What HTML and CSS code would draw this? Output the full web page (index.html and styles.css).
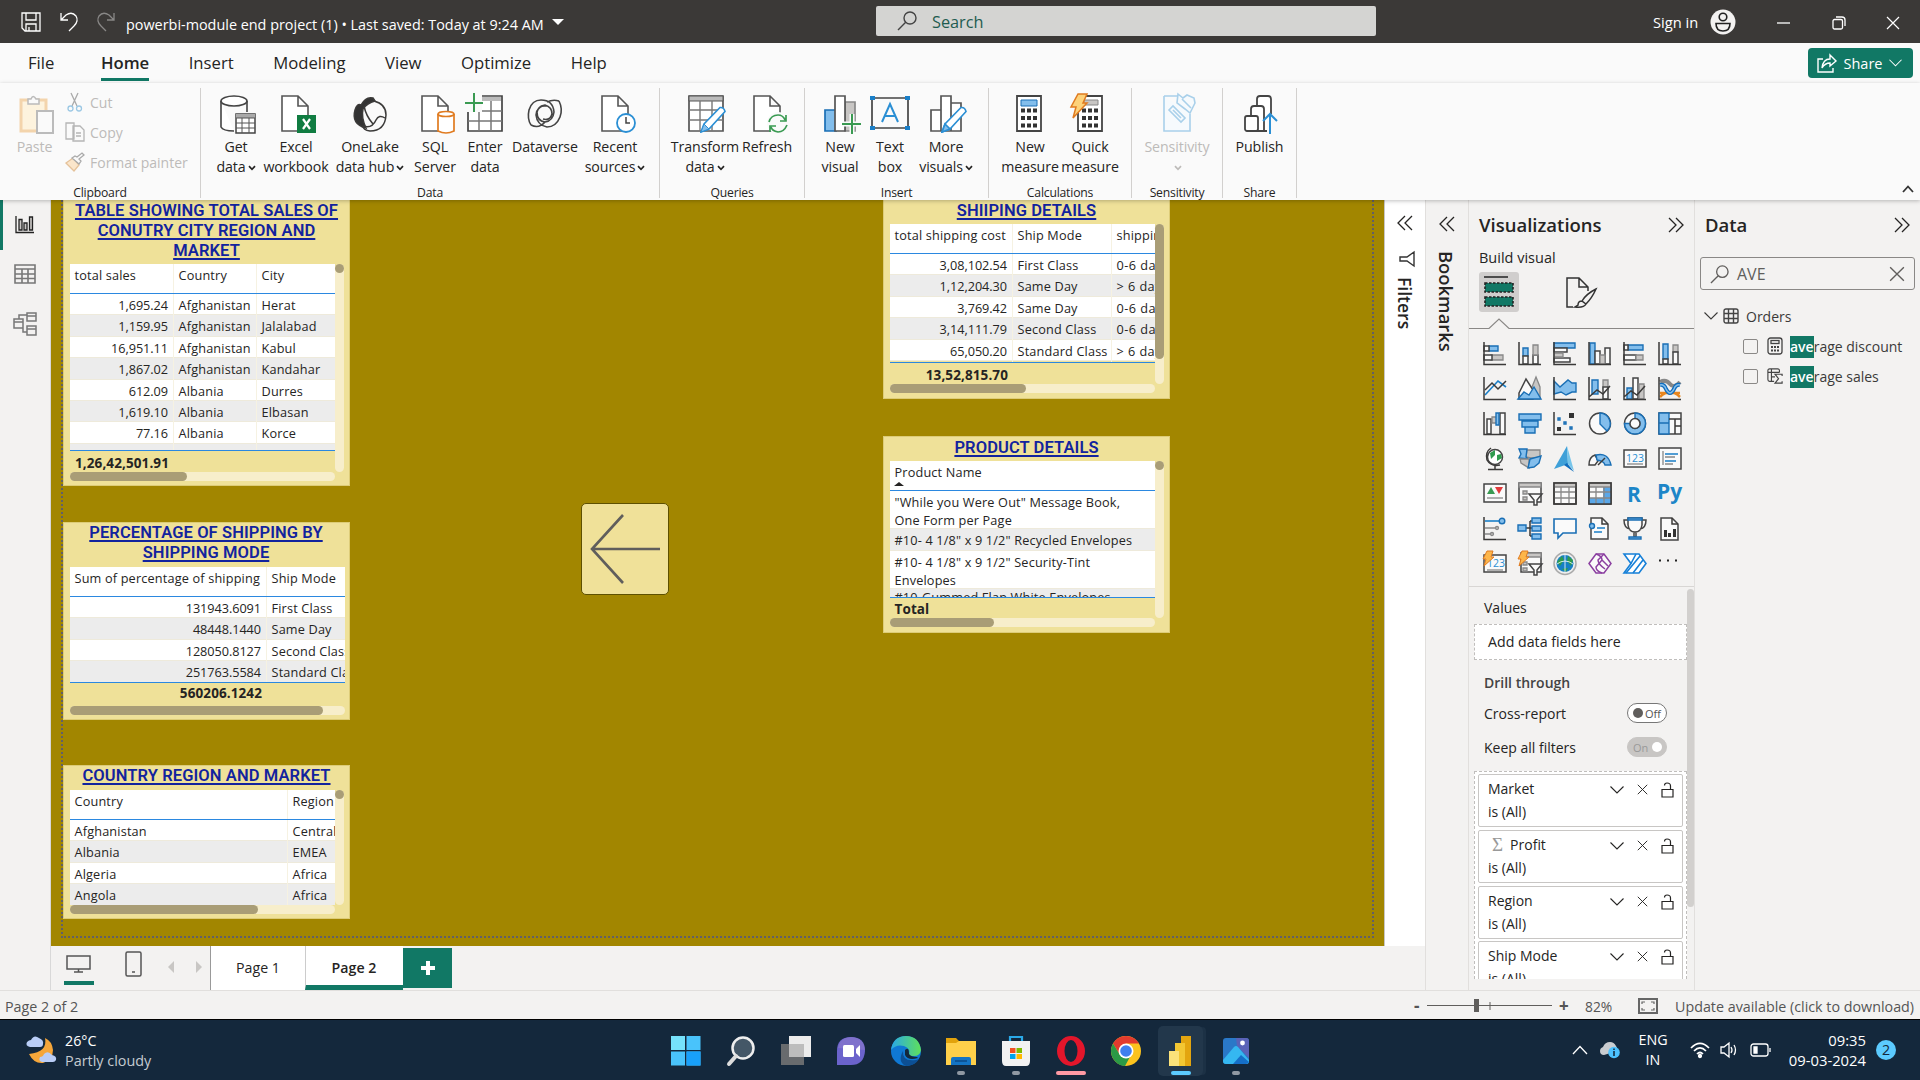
FILE: index.html
```html
<!DOCTYPE html>
<html lang="en">
<head>
<meta charset="utf-8">
<title>powerbi-module end project (1)</title>
<link rel="stylesheet" href="styles.css">
</head>
<body>
<svg class="defs" width="0" height="0">
  <symbol id="chev" viewBox="0 0 14 8"><path d="M.5 .5 7 7 13.500 .5" fill="none" stroke="currentColor" stroke-width="1.100"/></symbol>
  <symbol id="x" viewBox="0 0 14 14"><path d="M1 1 13 13M13 1 1 13" fill="none" stroke="currentColor" stroke-width="1.200"/></symbol>
  <symbol id="lock" viewBox="0 0 13 16"><path d="M1 7.500H12V15H1ZM3.500 3.500Q3.500 1 6 1Q9.500 1 9.500 4V7.500" fill="none" stroke="currentColor" stroke-width="1.200"/></symbol>
  <symbol id="dbl" viewBox="0 0 16 16"><path d="M1 1 8 8 1 15M8 1 15 8 8 15" fill="none" stroke="currentColor" stroke-width="1.300"/></symbol>
  <symbol id="mini" viewBox="0 0 8 6"><path d="M1 1.200 4 4.300 7 1.200" fill="none" stroke="currentColor" stroke-width="1.700"/></symbol>
  <symbol id="glass" viewBox="0 0 20 20"><circle cx="13" cy="7" r="6" fill="none" stroke="currentColor" stroke-width="1.400"/><path d="M8.700 11.300 1 19" stroke="currentColor" stroke-width="1.400"/></symbol>
  <symbol id="doc" viewBox="0 0 28 38"><path d="M1 1H17L27 11V36H1ZM17 1V11H27" fill="#fff" stroke="#555" stroke-width="1.600"/></symbol>
  <symbol id="pen" viewBox="0 0 26 27"><path d="M20 1.500Q24 1 25 5.500L9 23 1 26 4 18Z" fill="#fff" stroke="#2b8fd4" stroke-width="1.600"/><path d="M4 18 9 23 1 26Z" fill="#83beec" stroke="#2b8fd4"/></symbol>
</svg>

<header class="titlebar">
  <div class="quick">
    <svg width="20" height="20" viewBox="0 0 20 20" class="line"><path d="M1 1H19V19H4L1 16ZM5 1V8H15V1M5 19V12H15V19M8 19V15"/></svg>
    <svg width="18" height="20" viewBox="0 0 18 20" class="line"><path d="M1 1V8H8M1 8 6 3Q12-1 16 4Q19 9 14 14L9 19"/></svg>
    <svg width="18" height="20" viewBox="0 0 18 20" class="line dim"><path d="M17 1V8H10M17 8 12 3Q6-1 2 4Q-1 9 4 14L9 19"/></svg>
  </div>
  <span class="file-name">powerbi-module end project (1) • Last saved: Today at 9:24 AM</span>
  <i class="tri"></i>
  <div class="search"><svg width="20" height="20"><use href="#glass"/></svg><span>Search</span></div>
  <div class="account"><span>Sign in</span>
    <svg width="26" height="26" viewBox="0 0 26 26"><circle cx="13" cy="13" r="12.500" fill="#f3f2f1"/><circle cx="13" cy="8" r="3.800" fill="none" stroke="#222" stroke-width="1.600"/><path d="M6 14.500H20Q20 22 13 22T6 14.500Z" fill="none" stroke="#222" stroke-width="1.600"/></svg>
  </div>
  <div class="win">
    <svg width="14" height="14" viewBox="0 0 14 14" class="line"><path d="M0 7H13"/></svg>
    <svg width="14" height="14" viewBox="0 0 14 14" class="line"><rect x="1" y="3.500" width="9.500" height="9.500" rx="1.500"/><path d="M4 1H10Q13 1 13 4V10"/></svg>
    <svg width="14" height="14"><use href="#x"/></svg>
  </div>
</header>

<nav class="tabs">
  <span>File</span><span class="on">Home</span><span>Insert</span><span>Modeling</span><span>View</span><span>Optimize</span><span>Help</span>
  <div class="share"><svg width="20" height="19" viewBox="0 0 20 19" fill="none" stroke="#fff" stroke-width="1.400"><path d="M6 5H1V18H16V14"/><path d="M13 1 19 7 13 12V9Q8 9 5 14Q6 5 13 5Z"/></svg>Share<svg width="13" height="8"><use href="#chev"/></svg></div>
</nav>

<section class="ribbon">
  <div class="group clip"><div class="items">
    <div class="cmd off w-paste"><svg class="nudge" width="36" height="39" viewBox="0 0 36 39"><path d="M2 5H27V36H2Z" fill="#fdf3de" stroke="#f3d4ac" stroke-width="3"/><path d="M9 9V4H12Q14-1 17 4H20V9Z" fill="#fafafa" stroke="#bbb" stroke-width="1.500"/><path d="M18 16H34V38H18Z" fill="#fafafa" stroke="#bbb" stroke-width="2"/></svg><span>Paste</span></div>
    <div class="stack off">
      <div><svg width="20" height="20" viewBox="0 0 20 20" fill="none" stroke-width="1.300"><path d="M6 1 12 14M13 1 7 14" stroke="#aaa"/><circle cx="5.500" cy="16.500" r="2.500" stroke="#9cc8e4"/><circle cx="14" cy="16.500" r="2.500" stroke="#9cc8e4"/></svg>Cut</div>
      <div><svg width="20" height="20" viewBox="0 0 20 20" fill="#fafafa" stroke="#b5b5b5" stroke-width="1.300"><path d="M1 1H9V17H1ZM8 4H15L19 8V19H8ZM11 11H16M11 14H16"/></svg>Copy</div>
      <div><svg width="20" height="20" viewBox="0 0 20 20" stroke-width="1.300"><path d="M1 11 8 6 14 13 9 19Z" fill="#fbe6cb" stroke="#e5c29a"/><path d="M7 6 14 12 16 9 14 7 19 3 17 1 12 5 10 4Z" fill="#fafafa" stroke="#aaa"/></svg>Format painter</div>
    </div></div><div class="label">Clipboard</div></div>

  <div class="group data"><div class="items">
    <div class="cmd w52"><svg class="nudge" width="36" height="39" viewBox="0 0 36 39"><g fill="#fff" stroke="#444" stroke-width="1.600"><path d="M1 6V32Q3 36 14 36V36M27 6V17"/><ellipse cx="14" cy="6" rx="13" ry="5"/></g><path d="M16 19H35V38H16Z" fill="#fff" stroke="#444" stroke-width="1.500"/><path d="M16 19H35V23H16Z" fill="#aaa"/><path d="M16 23H35M16 28H35M16 33H35M22 23V38M29 23V38" stroke="#555"/></svg><span>Get<br>data<svg class="mini"><use href="#mini"/></svg></span></div>
    <div class="cmd w68"><svg class="nudge" width="36" height="39" viewBox="0 0 36 39"><use href="#doc" width="28" height="38" x="1"/><rect x="17" y="20" width="19" height="18" fill="#107c41"/><path d="M23 24 30 34M30 24 23 34" stroke="#fff" stroke-width="2.200"/></svg><span>Excel<br>workbook</span></div>
    <div class="cmd w80"><svg width="36" height="39" viewBox="0 0 36 39" fill="none" stroke="#3b3a39" stroke-width="1.500"><path d="M9 10Q14 1 21 3L23 6Q15 8 11 14Q9 22 14 33Q-1 29 3 15Q5 8 9 10Z" fill="#333"/><path d="M22 6Q34 9 34 20Q33 36 18 36Q11 35 11 31Q20 34 24 25Q27 19 33 23M12 11Q14 21 21 29"/></svg><span>OneLake<br>data hub<svg class="mini"><use href="#mini"/></svg></span></div>
    <div class="cmd w50"><svg class="nudge" width="36" height="39" viewBox="0 0 36 39"><use href="#doc" width="28" height="38" x="2"/><path d="M19 19V36Q27 40 35 36V19" fill="#fff" stroke="#e07b20" stroke-width="1.700"/><ellipse cx="27" cy="19" rx="8" ry="2.500" fill="#fff" stroke="#e07b20" stroke-width="1.700"/></svg><span>SQL<br>Server</span></div>
    <div class="cmd w50"><svg width="38" height="39" viewBox="0 0 38 39"><path d="M2 1H36V36H2Z" fill="#fff" stroke="#444" stroke-width="1.700"/><path d="M3 2H35V6H3Z" fill="#bbb"/><path d="M2 16H36M2 26H36M13 6V36M25 6V36" stroke="#777" stroke-width="1.500"/><path d="M0-2H16V17H0Z" fill="#fafafa"/><path d="M8-2V17M-1 8H17" stroke="#3a9a52" stroke-width="2"/></svg><span>Enter<br>data</span></div>
    <div class="cmd w70"><svg width="36" height="39" viewBox="0 0 36 39" fill="none" stroke="#444" stroke-width="1.600"><path d="M4 30Q0 24 2 15Q5 5 14 5Q26 5 27 17Q26 26 18 27Q10 26 10 17Q12 10 19 11M4 30Q12 34 18 27M32 6Q36 14 33 22Q29 32 20 32Q10 30 9 20Q10 11 18 10Q25 12 25 19Q23 26 16 24M32 6Q26 4 20 7"/></svg><span>Dataverse</span></div>
    <div class="cmd w70"><svg class="nudge" width="36" height="39" viewBox="0 0 36 39"><use href="#doc" width="28" height="38" x="2"/><circle cx="27" cy="28" r="9" fill="#fff" stroke="#2b8fd4" stroke-width="1.800"/><path d="M27 22V28H31" fill="none" stroke="#444" stroke-width="1.500"/></svg><span>Recent<br>sources<svg class="mini"><use href="#mini"/></svg></span></div>
  </div><div class="label">Data</div></div>

  <div class="group queries"><div class="items">
    <div class="cmd w70"><svg class="nudge" width="38" height="39" viewBox="0 0 38 39"><path d="M1 1H35V36H1Z" fill="#fff" stroke="#555" stroke-width="1.700"/><path d="M1 1H35V6H1Z" fill="#bbb" stroke="#555"/><path d="M1 15H35M1 25H35M12 6V36M24 6V36" stroke="#777" stroke-width="1.400"/><use href="#pen" x="12" y="11" width="26" height="27"/></svg><span>Transform<br>data<svg class="mini"><use href="#mini"/></svg></span></div>
    <div class="cmd w54"><svg class="nudge" width="36" height="39" viewBox="0 0 36 39"><use href="#doc" width="28" height="38" x="2"/><circle cx="27" cy="28" r="11" fill="#fafafa"/><path d="M18 27Q20 20 27 20Q32 20 34 25M35 20V26H29M36 30Q33 37 27 37Q21 36 20 32M19 37V31H25" fill="none" stroke="#3a9a52" stroke-width="1.700"/></svg><span>Refresh</span></div>
  </div><div class="label">Queries</div></div>

  <div class="group insert"><div class="items">
    <div class="cmd w56"><svg class="nudge" width="38" height="39" viewBox="0 0 38 39" stroke="#555" stroke-width="1.700"><path d="M22 7H32V36H22Z" fill="#c8c6c4" stroke="#888"/><path d="M2 15H13V36H2Z" fill="#83beec" stroke="#1a6fb5"/><path d="M12 1H22V36H12Z" fill="#fff"/><path d="M29 19V39M19 29H38" stroke="#fafafa" stroke-width="5"/><path d="M29 19V39M19 29H38" stroke="#3a9a52" stroke-width="2"/></svg><span>New<br>visual</span></div>
    <div class="cmd w44"><svg width="40" height="39" viewBox="0 0 40 39"><path d="M2 3H38V33H2Z" fill="none" stroke="#444" stroke-width="1.700"/><path d="M0 1H5V5H0ZM35 1H40V5H35ZM0 31H5V35H0ZM35 31H40V35H35Z" fill="#1a7fc8"/><path d="M12 27 20 9 28 27M15 21H25" fill="none" stroke="#2b8fd4" stroke-width="2"/></svg><span>Text<br>box</span></div>
    <div class="cmd w68"><svg class="nudge" width="38" height="39" viewBox="0 0 38 39" fill="#fff" stroke="#555" stroke-width="1.700"><path d="M22 8H32V36H22ZM2 15H12V36H2ZM12 1H22V36H12Z"/><use href="#pen" x="12" y="11" width="26" height="27"/></svg><span>More<br>visuals<svg class="mini"><use href="#mini"/></svg></span></div>
  </div><div class="label">Insert</div></div>

  <div class="group calc"><div class="items">
    <div class="cmd w60"><svg class="back2" width="30" height="39" viewBox="0 0 30 39"><path d="M3 1H27V36H3Z" fill="#fff" stroke="#444" stroke-width="1.800"/><path d="M7 5H23V11H7Z" fill="#83beec" stroke="#1a6fb5"/><path d="M7 15.500H23M7 23H23M7 30.500H23" stroke="#333" stroke-width="4" stroke-dasharray="4 2"/></svg><span>New<br>measure</span></div>
    <div class="cmd w60"><svg class="back2" width="38" height="39" viewBox="0 0 38 39"><path d="M8 1H32V36H8Z" fill="#fff" stroke="#444" stroke-width="1.800"/><path d="M14 5H28V10H14Z" fill="#c8c6c4" stroke="#888"/><path d="M12 15.500H28M12 23H28M12 30.500H28" stroke="#333" stroke-width="4" stroke-dasharray="4 2"/><path d="M8-1H17L13 8H17L3 23 6 12H1Z" fill="#fdd27a" stroke="#e07b20" stroke-width="1.500"/></svg><span>Quick<br>measure</span></div>
  </div><div class="label">Calculations</div></div>

  <div class="group sens"><div class="items">
    <div class="cmd off w90"><svg class="nudge" width="38" height="39" viewBox="0 0 38 39" fill="#f6fafd" stroke="#a9d0ea" stroke-width="1.600"><path d="M4 1H19M30 19V36H4V1"/><path d="M9 15 13 11 25 23 21 27ZM13 15 21 23M18-1 23 3 27 0 34 3 35 8 33 12 30 18 25 14 17 8ZM22 4 31 13"/></svg><span>Sensitivity<br><svg class="mini"><use href="#mini"/></svg></span></div>
  </div><div class="label">Sensitivity</div></div>

  <div class="group pub"><div class="items">
    <div class="cmd w73"><svg class="nudge" width="38" height="39" viewBox="0 0 38 39" fill="#fff" stroke="#444" stroke-width="1.800"><path d="M14 14V4Q14 1 17 1H25Q28 1 28 4V36H14"/><path d="M8 24V14Q8 11 11 11H18Q21 11 21 14V36H8"/><rect x="2" y="21" width="13" height="15" rx="2"/><path d="M27 39V19" stroke="#fafafa" stroke-width="6"/><path d="M27 39V20M20 26 27 19 34 26" fill="none" stroke="#2b8fd4" stroke-width="2"/></svg><span>Publish</span></div>
  </div><div class="label">Share</div></div>
  <svg class="collapse" width="12" height="8" viewBox="0 0 12 8"><path d="M1 7 6 1.500 11 7" fill="none" stroke="#333" stroke-width="1.800"/></svg>
</section>

<main class="work">
  <aside class="rail">
    <div class="on"><svg width="20" height="20" viewBox="0 0 20 20" fill="#c8c6c4" stroke="#222" stroke-width="1.300"><path d="M1 1V17.500H19" fill="none"/><path d="M4 4.500H7V15H4ZM9 8H12V15H9ZM14.500 2H17.500V15H14.500Z"/></svg></div>
    <div><svg width="22" height="20" viewBox="0 0 22 20" fill="none" stroke="#777" stroke-width="1.600"><path d="M1 1H21V19H1ZM1 5H21M1 10H21M1 14.500H21M8 5V19M14 5V19"/></svg></div>
    <div><svg width="24" height="24" viewBox="0 0 24 24" fill="none" stroke="#777" stroke-width="1.500"><path d="M1 7H10V16H1ZM1 10H10M14 1H23V9H14ZM14 4H23M14 14H23V23H14ZM14 17H23M6 7V3H14M10 13V20H14"/></svg></div>
  </aside>

  <div class="center">
    <div class="canvas">
      <div class="page"></div>

      <article class="card c1">
        <h2>TABLE SHOWING TOTAL SALES OF CONUTRY CITY REGION AND MARKET</h2>
        <div class="body">
          <div class="grid g1">
            <div class="row head"><b>total sales</b><b>Country</b><b>City</b></div>
            <div class="rows">
              <div class="row"><b>1,695.24</b><b>Afghanistan</b><b>Herat</b></div>
              <div class="row"><b>1,159.95</b><b>Afghanistan</b><b>Jalalabad</b></div>
              <div class="row"><b>16,951.11</b><b>Afghanistan</b><b>Kabul</b></div>
              <div class="row"><b>1,867.02</b><b>Afghanistan</b><b>Kandahar</b></div>
              <div class="row"><b>612.09</b><b>Albania</b><b>Durres</b></div>
              <div class="row"><b>1,619.10</b><b>Albania</b><b>Elbasan</b></div>
              <div class="row"><b>77.16</b><b>Albania</b><b>Korce</b></div>
              <div class="row"><b></b><b></b><b></b></div>
            </div>
            <div class="row total"><b>1,26,42,501.91</b></div>
            <div class="hs"><i class="t117"></i></div>
          </div>
          <div class="vs"><i></i></div>
        </div>
      </article>

      <article class="card c2">
        <h2>PERCENTAGE OF SHIPPING BY SHIPPING MODE</h2>
        <div class="body">
          <div class="grid g2">
            <div class="row head"><b>Sum of percentage of shipping</b><b>Ship Mode</b></div>
            <div class="rows">
              <div class="row"><b>131943.6091</b><b>First Class</b></div>
              <div class="row"><b>48448.1440</b><b>Same Day</b></div>
              <div class="row"><b>128050.8127</b><b>Second Class</b></div>
              <div class="row"><b>251763.5584</b><b>Standard Class</b></div>
            </div>
            <div class="row total"><b>560206.1242</b></div>
            <div class="hs"><i class="t253"></i></div>
          </div>
        </div>
      </article>

      <article class="card c3">
        <h2>COUNTRY REGION AND MARKET</h2>
        <div class="body">
          <div class="grid g3">
            <div class="row head"><b>Country</b><b>Region</b></div>
            <div class="rows">
              <div class="row"><b>Afghanistan</b><b>Central</b></div>
              <div class="row"><b>Albania</b><b>EMEA</b></div>
              <div class="row"><b>Algeria</b><b>Africa</b></div>
              <div class="row"><b>Angola</b><b>Africa</b></div>
            </div>
            <div class="hs"><i class="t188"></i></div>
          </div>
          <div class="vs"><i></i></div>
        </div>
      </article>

      <article class="card c4">
        <h2>SHIIPING DETAILS</h2>
        <div class="body">
          <div class="grid g4">
            <div class="row head"><b>total shipping cost</b><b>Ship Mode</b><b>shipping</b></div>
            <div class="rows">
              <div class="row"><b>3,08,102.54</b><b>First Class</b><b>0-6 days</b></div>
              <div class="row"><b>1,12,204.30</b><b>Same Day</b><b>&gt; 6 days</b></div>
              <div class="row"><b>3,769.42</b><b>Same Day</b><b>0-6 days</b></div>
              <div class="row"><b>3,14,111.79</b><b>Second Class</b><b>0-6 days</b></div>
              <div class="row"><b>65,050.20</b><b>Standard Class</b><b>&gt; 6 days</b></div>
            </div>
            <div class="row total"><b>13,52,815.70</b></div>
            <div class="hs"><i class="t136"></i></div>
          </div>
          <div class="vs"><i class="tall"></i></div>
        </div>
      </article>

      <article class="card c5">
        <h2>PRODUCT DETAILS</h2>
        <div class="body">
          <div class="grid g5">
            <div class="row head"><b>Product Name<i class="sort"></i></b></div>
            <div class="rows">
              <div class="row two"><b>"While you Were Out" Message Book,<br>One Form per Page</b></div>
              <div class="row"><b>#10- 4 1/8" x 9 1/2" Recycled Envelopes</b></div>
              <div class="row two"><b>#10- 4 1/8" x 9 1/2" Security-Tint<br>Envelopes</b></div>
              <div class="row cut"><b>#10-Gummed Flap White Envelopes,</b></div>
            </div>
            <div class="row total"><b>Total</b></div>
            <div class="hs"><i class="t104"></i></div>
          </div>
          <div class="vs"><i></i></div>
        </div>
      </article>

      <div class="back"><svg width="70" height="72" viewBox="0 0 70 72" fill="none" stroke="#605e5c" stroke-width="2.600"><path d="M33 2 2 36 33 70M2 36H70"/></svg></div>
    </div>

    <div class="pages">
      <div class="view on"><svg width="25" height="18" viewBox="0 0 25 18" fill="none" stroke="#555" stroke-width="1.500"><path d="M1 1H24V14H1ZM12.500 14V17M8 17H17"/></svg></div>
      <div class="view phone"><svg width="17" height="26" viewBox="0 0 17 26" fill="none" stroke="#555" stroke-width="1.500"><rect x="1" y="1" width="15" height="24" rx="1.500"/><path d="M7 21H10"/></svg></div>
      <i class="nav prev"></i><i class="nav next"></i>
      <div class="ptab">Page 1</div><div class="ptab on">Page 2</div>
      <div class="plus"><svg width="16" height="16" viewBox="0 0 16 16"><path d="M8 1V15M1 8H15" stroke="#fff" stroke-width="4"/></svg></div>
    </div>
  </div>

  <aside class="filters"><svg class="flip" width="16" height="16"><use href="#dbl"/></svg><svg class="funnel" width="16" height="16" viewBox="0 0 16 16" fill="none" stroke="#333" stroke-width="1.400"><path d="M15 1V15L8 10H1V6H8Z"/></svg><span>Filters</span></aside>
  <aside class="bookmarks"><svg class="flip" width="16" height="16"><use href="#dbl"/></svg><span>Bookmarks</span></aside>

  <aside class="viz">
    <div class="phead"><h3>Visualizations</h3><svg width="16" height="16"><use href="#dbl"/></svg></div>
    <div class="sub">Build visual</div>
    <div class="modes">
      <div class="on"><svg width="32" height="32" viewBox="0 0 32 32"><path d="M1 1H25" stroke="#222" stroke-width="1.500"/><path d="M2 7H30V16H2ZM2 21H30V30H2Z" fill="#117865" stroke="#222" stroke-width="1.600" stroke-dasharray="2.500 1.500"/></svg></div>
      <div><svg width="31" height="31" viewBox="0 0 31 31" fill="none" stroke="#333" stroke-width="1.500"><path d="M7 30H1V1H13L22 10V14M13 1V10H22M30 12Q20 17 16 24L20 27Q26 21 30 12ZM16 24Q12 24 12 28L9 30Q18 31 20 27"/></svg></div>
    </div>
    <svg class="caret" width="225" height="11" viewBox="0 0 225 11"><path d="M0 10.500H20L30 1 40 10.500H225" fill="none" stroke="#8a8886" stroke-width="1.200"/></svg>
    <div class="gallery">
      <svg><path class="b" d="M6 4H15V9H6Z"/><path class="g" d="M8 13H20V18H8Z"/><path class="w" d="M1 4H6V9H1ZM1 13H9V18H1Z"/><path class="a" d="M1 0V22.500H23"/></svg>
      <svg><path class="b" d="M5 6H10V14H5Z"/><path class="w" d="M5 14H10V22H5ZM15 13H20V22H15Z"/><path class="g" d="M15 3H20V13H15Z"/><path class="a" d="M1 0V22.500H23"/></svg>
      <svg><path class="b" d="M1 1H22V6H1Z"/><path class="w" d="M1 6H14V10H1ZM1 16H17V20H1Z"/><path class="g" d="M1 11H10V15H1Z"/><path class="a" d="M1 0V22.500H23"/></svg>
      <svg><path class="b" d="M2 1H7V22H2Z"/><path class="w" d="M7 9H12V22H7ZM17 6H22V22H17Z"/><path class="g" d="M12 13H17V22H12Z"/><path class="a" d="M1 0V22.500H23"/></svg>
      <svg><path class="b" d="M5 3H20V8H5Z"/><path class="w" d="M1 3H5V8H1ZM1 13H13V18H1Z"/><path class="g" d="M13 13H20V18H13Z"/><path class="a" d="M1 0V22.500H23"/></svg>
      <svg><path class="b" d="M5 2H10V17H5Z"/><path class="g" d="M15 3H20V10H15Z"/><path class="w" d="M5 17H10V22H5ZM15 10H20V22H15Z"/><path class="a" d="M1 0V22.500H23"/></svg>

      <svg><path d="M2 18 15 4 23 10" class="bl"/><path d="M2 13 9 6 15 12 23 4" class="a"/><path class="a" d="M1 0V22.500H23"/></svg>
      <svg><path class="g" d="M10 20 18 0 22 10V22H10Z"/><path class="w" d="M1 16 8 2 15 13V22H1Z"/><path class="b" d="M0 22 6 15 11 18 16 10 23 22Z"/></svg>
      <svg><path class="b" d="M1 4 7 10 15 3 19 6H23V15H19L13 18 8 15 1 17Z"/><path class="a" d="M1 0V22.500H23"/></svg>
      <svg><path class="b" d="M4 3H10V17H4Z"/><path class="g" d="M15 3H20V12H15Z"/><path class="w" d="M15 10H20V22H15Z"/><path class="a" d="M1 0V22.500H23M1 20 9 13 15 17 22 9"/></svg>
      <svg><path class="b" d="M4 11H9V22H4Z"/><path class="w" d="M10 1H15V22H10Z"/><path class="g" d="M16 7H21V22H16Z"/><path class="a" d="M1 0V22.500H23M1 20 8 14 14 18 22 9"/></svg>
      <svg><path d="M2 5Q8 2 12 7T22 5" fill="none" stroke="#888" stroke-width="4"/><path d="M2 16H22M2 20Q12 10 22 20" fill="none" stroke="#e8861e" stroke-width="2.500"/><path d="M2 8Q6 7 8 12Q12 20 16 12Q18 7 22 8" fill="none" stroke="#0f6cbd" stroke-width="4"/><path d="M2 8Q6 7 8 12Q12 20 16 12Q18 7 22 8" fill="none" stroke="#83beec" stroke-width="1.500"/><path class="a" d="M1 0V22.500H23"/></svg>

      <svg><path class="w" d="M4 7H8V22H4ZM17 1H22V22H17Z"/><path class="g" d="M9 5H14V11H9Z"/><path class="b" d="M13 1H16V13H13Z"/><path class="a" d="M1 0V22.500H23"/></svg>
      <svg><path class="b" d="M1 2H23V8H1ZM4 9H20V15H4ZM7 15H17V21H7Z"/></svg>
      <svg><path class="b" d="M5 6H7V8H5ZM11 10H13V12H11ZM17 15H19V17H17Z"/><path d="M16 1H21V6H16ZM4 15H8V19H4Z" fill="#333"/><path class="a" d="M1 0V22.500H23"/></svg>
      <svg><circle class="w" cx="12" cy="11.500" r="10.500"/><path class="b" d="M12 1V12L19 19A10.500 10.500 0 0 0 12 1Z"/></svg>
      <svg><circle class="w" cx="12" cy="11.500" r="10.500"/><path class="b" d="M12 1A10.500 10.500 0 1 1 1.500 11.500H7A5 5 0 1 0 12 6.500Z"/><circle class="w" cx="12" cy="11.500" r="5"/></svg>
      <svg><path class="w" d="M1 1H23V22H1Z"/><path class="b" d="M1 1H11V11H1ZM1 11H11V22H1Z"/><path class="a" d="M11 7H23M17 7V22M17 14H23"/></svg>

      <svg><circle cx="12" cy="10" r="7.500" fill="#fff" stroke="#444" stroke-width="1.500"/><path d="M7 6 12 3 12 8 8 12ZM14 8 18 7 19 11 14 14Z" fill="#2f9a4d"/><path class="a" d="M8 1Q2 5 4 13Q8 20 17 18M12 18V22M5 22.500H20"/></svg>
      <svg><path class="g" d="M9 3H22V10L18 11 13 11 8 10Z"/><path class="b" d="M1 2H9L8 10 10 12 1 11 3 7Z"/><path class="g" d="M2 12 11 12V21L3 16Z"/><path class="b" d="M12 12 23 9 21 16 16 20 10 21Z"/></svg>
      <svg><path d="M14-1 1 22 15 17Z" fill="#3fa0d8"/><path d="M14-1 15 17 21 24Z" fill="#76c5ea"/><path d="M14 16 21 25 11 18Z" fill="#0f6cbd"/></svg>
      <svg><path class="w" d="M1 18Q1 10 7 8L10 14 7 18Z"/><path class="b" d="M8 8Q20 5 23 18H17Q16 14 9 13Z"/><path class="a" d="M10 18 17 11" stroke-width="3"/></svg>
      <svg><path class="w" d="M1 3H23V20H1Z"/><text x="3" y="14.500" class="t">123</text><path class="gl" d="M4 17H20"/></svg>
      <svg><path class="w" d="M1 1H23V22H1Z"/><path d="M7 7H20M7 14H18" class="bl" stroke-width="3"/><path class="gl" d="M5 4V18M7 10H17M7 17H15"/></svg>

      <svg><path class="w" d="M1 2H23V20H1Z"/><path d="M4 12 8 5 12 12Z" fill="#3a9a52"/><path d="M12 5H20L16 12Z" fill="#e23b3b"/><path class="gl" d="M4 16H20"/></svg>
      <svg><path class="w" d="M1 1H23V20H1Z"/><path class="g" d="M1 1H23V5H1ZM5 9H9V12H5ZM5 15H9V18H5Z"/><path class="w" d="M11 12H24L19 18V23H16V18Z"/></svg>
      <svg><path class="w" d="M1 1H23V22H1Z"/><path class="g" d="M1 1H23V5H1Z"/><path class="gl" d="M1 10H23M1 16H23M8 5V22M16 5V22"/><path class="a" d="M1 1H23V22H1Z"/></svg>
      <svg><path class="w" d="M1 1H23V22H1Z"/><path d="M15 5H23V22H1V16H15Z" fill="#5aa7e8"/><path class="g" d="M1 1H23V5H1Z"/><path class="gl" d="M1 10H23M1 16H23M8 5V22M16 5V22"/><path class="a" d="M1 1H23V22H1Z"/></svg>
      <svg><text x="4" y="20" class="big">R</text></svg>
      <svg><text x="-1" y="17" class="big">Py</text></svg>

      <svg><path class="bl" d="M2 4H16"/><circle class="b" cx="19" cy="4" r="2.800"/><path class="gl" d="M2 11H13M2 17H8"/><circle class="g" cx="14" cy="11" r="1.500"/><circle class="g" cx="9" cy="17" r="1.500"/><path class="a" d="M1 0V22.500H23"/></svg>
      <svg><path class="a" d="M8 11H15M12 4V19M12 4H15M12 19H15"/><path class="b" d="M0 8H8V14H0ZM14 1H23V6H14ZM14 9H23V14H14ZM14 17H23V22H14Z"/></svg>
      <svg><path d="M1 2H23V16H10L5 21V16H1Z" fill="#fafafa" stroke="#1a6fb5" stroke-width="1.600"/></svg>
      <svg><path class="w" d="M3 1H14L20 7V22H3Z"/><path class="a" d="M14 1V7H20"/><circle class="b" cx="4" cy="9" r="2.500"/><path class="bl" d="M9 11H17M6 15H14"/></svg>
      <svg><path class="w" d="M5 1H19V8Q18 15 12 15T5 8ZM5 3H1Q1 11 7 12M19 3H23Q23 11 17 12M11 15V20H13V15"/><path class="b" d="M5 1H19V3H5ZM6 20H18V22H6Z"/></svg>
      <svg><path class="w" d="M3 1H14L20 7V23H3Z"/><path class="a" d="M14 1V7H20"/><path d="M6 13H9V20H6ZM10 16H13V20H10ZM15 12H18V20H15Z" fill="#333"/></svg>

      <svg><path class="w" d="M1 3H23V20H1Z"/><text x="4" y="15" class="t">123</text><path class="gl" d="M4 18H20"/><path class="o" d="M4-1H10L8 5H11L1 14 3 7H0Z"/></svg>
      <svg><path class="w" d="M3 1H23V20H3Z"/><path class="g" d="M5 1H23V5H5ZM5 10H9V13H5ZM5 16H9V19H5Z"/><path class="w" d="M11 12H24L19 18V23H16V18Z"/><path class="o" d="M4-1H10L8 5H11L1 14 3 7H0Z"/></svg>
      <svg><circle cx="12" cy="11.500" r="11" fill="#eee" stroke="#aaa" stroke-width="1.500"/><circle cx="12" cy="11.500" r="8.500" fill="#1680c4"/><path d="M4 10 9 4 11 8 7 14ZM15 4 20 8 18 14 14 9ZM9 17 15 16 13 20Z" fill="#2f9a4d"/><path d="M4 12Q12 6 20 12M12 3V20" stroke="#fff" fill="none" stroke-width=".8"/></svg>
      <svg fill="#fafafa" stroke="#8b3fa0" stroke-width="1.500"><path d="M1 11.500 8 2H16L23 11.500 16 21H8Z"/><path fill="none" d="M8 2Q14 4 14 8L8 15Q8 19 14 21M16 2 10 8Q10 12 17 17M14 8 20 14"/></svg>
      <svg fill="#fff" stroke="#1680d8" stroke-width="1.600"><path d="M1 2H16L23 11.500 16 21H1L8 11.500Z"/><path fill="none" d="M8 11.500 13 2M3 21 17 4M10 21 20 8"/></svg>
      <svg><path d="M1 8.500H3M9 8.500H11M17 8.500H19" stroke="#222" stroke-width="2"/></svg>
    </div>
    <div class="wells"><div class="inner">
      <div class="lab">Values</div>
      <div class="drop">Add data fields here</div>
      <div class="lab drill">Drill through</div>
      <div class="opt"><span>Cross-report</span><div class="tog"><i></i>Off</div></div>
      <div class="opt"><span>Keep all filters</span><div class="tog dis">On<i></i></div></div>
      <div class="fwell">
        <div class="f"><div><span>Market</span><svg width="14" height="8"><use href="#chev"/></svg><svg width="11" height="11"><use href="#x"/></svg><svg width="13" height="16"><use href="#lock"/></svg></div><p>is (All)</p></div>
        <div class="f"><div><span><em>Σ</em>Profit</span><svg width="14" height="8"><use href="#chev"/></svg><svg width="11" height="11"><use href="#x"/></svg><svg width="13" height="16"><use href="#lock"/></svg></div><p>is (All)</p></div>
        <div class="f"><div><span>Region</span><svg width="14" height="8"><use href="#chev"/></svg><svg width="11" height="11"><use href="#x"/></svg><svg width="13" height="16"><use href="#lock"/></svg></div><p>is (All)</p></div>
        <div class="f"><div><span>Ship Mode</span><svg width="14" height="8"><use href="#chev"/></svg><svg width="11" height="11"><use href="#x"/></svg><svg width="13" height="16"><use href="#lock"/></svg></div><p>is (All)</p></div>
      </div></div>
      <div class="sbar"></div>
    </div>
  </aside>

  <aside class="datap">
    <div class="phead"><h3>Data</h3><svg width="16" height="16"><use href="#dbl"/></svg></div>
    <div class="find"><svg width="19" height="19"><use href="#glass"/></svg><span>AVE</span><svg width="16" height="16"><use href="#x"/></svg></div>
    <div class="tree">
      <div class="t0"><svg width="14" height="8"><use href="#chev"/></svg><svg width="16" height="16" viewBox="0 0 16 16" fill="none" stroke="#444" stroke-width="1.400"><rect x="1" y="1" width="14" height="14" rx="2"/><path d="M1 5.500H15M1 10.500H15M5.500 1V15M10.500 1V15"/></svg><span>Orders</span></div>
      <div class="t1"><i></i><svg width="16" height="18" viewBox="0 0 16 18" fill="none" stroke="#444" stroke-width="1.300"><rect x="1" y="1" width="14" height="16" rx="2.500"/><rect x="4" y="3.500" width="8" height="3"/><path d="M4 10H12M4 13.500H12" stroke-width="2" stroke-dasharray="2 1"/></svg><span><mark>ave</mark>rage discount</span></div>
      <div class="t1"><i></i><svg width="18" height="18" viewBox="0 0 18 18" fill="none" stroke="#444" stroke-width="1.300"><path d="M14 5V3Q14 1 12 1H3Q1 1 1 3V13Q1 15 3 15H8M5 1V15M1 5H14M5 10H9M17 9V7H9L13 12 9 17H17V15"/></svg><span><mark>ave</mark>rage sales</span></div>
    </div>
  </aside>
</main>

<footer class="status">
  <span class="pg">Page 2 of 2</span>
  <div class="zoom"><b>-</b><svg width="125" height="14" viewBox="0 0 125 14"><path d="M0 6.500H125M63 3V11" stroke="#605e5c"/><path d="M47 0H52V13H47Z" fill="#605e5c"/></svg><b>+</b></div>
  <span class="pct">82%</span>
  <svg width="20" height="16" viewBox="0 0 20 16" fill="none" stroke="#666"><path d="M1 1H19V15H1Z" stroke-width="2"/><path d="M4 6V4H7M13 4H16V6M16 10V12H13M7 12H4V10" stroke-width="1.200"/></svg>
  <span class="upd">Update available (click to download)</span>
</footer>

<footer class="taskbar">
  <div class="weather"><svg width="31" height="30" viewBox="0 0 31 30"><path d="M19 3Q22 17 3 19Q8 29 17 28Q27 25 27 15Q26 6 19 3Z" fill="#f5a63a"/><path d="M4 12Q-1 11 1 7Q3 5 5 5Q8-1 13 3Q18 5 17 9Q17 12 14 12ZM16 27Q12 26 14 22Q17 22 18 19Q22 15 26 20Q31 21 30 25Q29 27 27 27Z" fill="#b9cdf7"/></svg><p>26°C<small>Partly cloudy</small></p></div>
  <div class="apps">
    <div><svg width="30" height="30"><path d="M0 0H14V14H0ZM15.500 0H29.500V14H15.500ZM0 15.500H14V29.500H0ZM15.500 15.500H29.500V29.500H15.500Z" fill="#49c3fb"/><path d="M0 0H14V14H0Z" fill="#76e2fb"/><path d="M15.500 15.500H29.500V29.500H15.500Z" fill="#18a0fa"/></svg></div>
    <div><svg width="30" height="30"><circle cx="17" cy="12" r="10.500" fill="#445767" stroke="#eee" stroke-width="2.500"/><path d="M10 20 3 28" stroke="#ddd" stroke-width="4" stroke-linecap="round"/></svg></div>
    <div><svg width="30" height="30"><path d="M8 0H30V21H8Z" fill="#ececec"/><path d="M0 8H23V29H0Z" fill="#777" opacity=".85"/><path d="M8 8H23V21H8Z" fill="#bdbdbd"/></svg></div>
    <div><svg width="30" height="30"><path d="M1 29V15Q1 1 15 1T29 15Q28 29 15 29Z" fill="#6b63cc"/><path d="M2 12Q4 1 16 1Q28 2 29 14Z" fill="#8878cc" opacity=".7"/><rect x="7" y="9" width="11" height="12" rx="1.500" fill="#fff"/><path d="M20 13 24 9V21L20 17Z" fill="#fff"/></svg></div>
    <div><svg width="30" height="30"><defs><linearGradient id="eg"><stop offset="0" stop-color="#29a8e8"/><stop offset="1" stop-color="#5fe05a"/></linearGradient></defs><circle cx="15" cy="15" r="15" fill="#0f78d4"/><path d="M0 14Q2 0 15 0T30 14Q29 20 23 20H18Q20 12 13 10Q5 8 0 14Z" fill="url(#eg)"/><path d="M12 15Q11 26 25 24L28 23Q24 30 15 30Q6 26 12 15Z" fill="#0c4f94"/><path d="M14 14Q18 10 18 18Q20 21 26 21L27 22Q17 25 14 19Z" fill="#14283c"/></svg></div>
    <div class="run"><svg width="30" height="30"><path d="M0 2H10L13 5H30V29H0Z" fill="#e2a30c"/><path d="M0 7H10L13 5H30V29H0Z" fill="#ffd04a"/><path d="M5 29V23Q5 21 7 21H23Q25 21 25 23V29Z" fill="#1474c4"/><path d="M9 25H21" stroke="#0a4a88" stroke-width="1.500"/></svg></div>
    <div class="run"><svg width="30" height="30"><path d="M9 6V1H21V6" fill="none" stroke="#2aa9e8" stroke-width="2.200"/><path d="M1 5H29V25Q29 30 25 30H5Q1 30 1 25Z" fill="#f2f2f2"/><path d="M9 12H14.500V17H9Z" fill="#f25022"/><path d="M15.500 12H21V17H15.500Z" fill="#7fba00"/><path d="M9 18H14.500V23H9Z" fill="#00a4ef"/><path d="M15.500 18H21V23H15.500Z" fill="#ffb900"/></svg></div>
    <div class="run op"><svg width="30" height="30"><path fill-rule="evenodd" d="M15 0A14 15 0 1 0 15 30A14 15 0 1 0 15 0ZM15 4A6.500 11 0 1 1 15 26A6.500 11 0 1 1 15 4Z" fill="#e3162b"/></svg></div>
    <div><svg width="30" height="30" viewBox="0 0 30 30"><circle cx="15" cy="15" r="15" fill="#fcc31e"/><path d="M2 7.500A15 15 0 0 1 28 7.500H15L9 19Z" fill="#e33b2e"/><path d="M2 7.500A15 15 0 0 0 14 30L20 19H9Z" fill="#2b9a46"/><circle cx="15" cy="15" r="7.500" fill="#fff"/><circle cx="15" cy="15" r="5.800" fill="#3f7fee"/></svg></div>
    <div class="run act"><svg width="30" height="30"><path d="M15 0H25V30H15Z" fill="#e3a50f"/><path d="M9 7H19V30H9Z" fill="#f3c733"/><path d="M3 15H13V30H3Z" fill="#fbe27a"/></svg></div>
    <div class="run"><svg width="30" height="30"><rect x="2" y="2" width="26" height="26" rx="3" fill="#2a78c8"/><path d="M15 2H25Q28 2 28 5V22L16 10Z" fill="#5a63b8"/><path d="M2 24 13 11Q15 9 17 11L28 24V25Q28 28 25 28H5Q2 28 2 25Z" fill="#35b7f1"/><path d="M12 28 20 19 28 26Q27 28 25 28Z" fill="#156fc8"/><circle cx="21.500" cy="7" r="2.400" fill="#fff"/></svg></div>
  </div>
  <div class="tray">
    <svg width="16" height="10" viewBox="0 0 16 10" class="line"><path d="M1 9 8 1.500 15 9"/></svg>
    <svg width="20" height="18" viewBox="0 0 20 18"><path d="M4 14Q0 14 0 10Q0 7 3 6Q5 1 10 1Q14 1 16 5Q18 7 17 10Z" fill="#c9ccd0"/><circle cx="14" cy="11.500" r="5.800" fill="#4cc2ff"/><path d="M14 10V15M14 7.500V9" stroke="#123" stroke-width="1.500"/></svg>
    <p class="lang">ENG<br>IN</p>
    <svg width="20" height="16" viewBox="0 0 20 16" class="line"><path d="M1 6Q10-3 19 6M4 9Q10 3 16 9M7 12Q10 9 13 12" stroke-width="1.700"/><circle cx="10" cy="14" r="1.500" fill="#fff"/></svg>
    <svg width="20" height="16" viewBox="0 0 20 16" class="line"><path d="M1 5H4L9 1V15L4 11H1ZM11 5Q13 8 11 11M14 3Q17 8 14 13"/></svg>
    <svg width="21" height="16" viewBox="0 0 21 16" class="line"><rect x="1" y="2" width="17" height="12" rx="2.500"/><path d="M20 6V10"/><path d="M4 5H7V11H4Z" fill="#fff"/></svg>
    <p class="clock">09:35<br>09-03-2024</p>
    <b class="badge">2</b>
  </div>
</footer>
</body>
</html>
```
FILE: styles.css
```css
* { box-sizing: border-box; }
body { margin: 0; width: 1920px; height: 1080px; overflow: hidden; display: flex; flex-direction: column; font-family: "Open Sans", "Noto Sans", sans-serif; font-size: 14px; color: #252423; background: #f3f2f1; }
svg { flex: none; overflow: visible; display: block; }
.defs { position: absolute; }
p, h2, h3 { margin: 0; }
.line { fill: none; stroke: #fff; stroke-width: 1.300; }
.dim { opacity: .4; }

.titlebar { height: 43px; flex: none; background: #3b3937; color: #fff; display: flex; align-items: center; padding-left: 21px; }
.quick { display: flex; gap: 19px; width: 105px; }
.file-name { width: 418px; white-space: nowrap; font-size: 14.400px; padding-top: 5px; }
.tri { border: 6px solid transparent; border-top-color: #fff; border-bottom: 0; margin-left: 8px; }
.search { margin-left: 312px; width: 500px; height: 30px; margin-top: -1px; background: #d4d4d2; border-radius: 2px; display: flex; align-items: center; padding-left: 21px; gap: 15px; color: #1f5c50; font-size: 16.300px; }
.search svg { color: #444; }
.search span { padding-top: 1px; }
.account { margin-left: 277px; width: 83px; display: flex; align-items: center; justify-content: space-between; font-size: 14.700px; }
.win { display: flex; gap: 40.500px; margin-left: 41px; padding-top: 3px; }

.tabs { height: 40px; flex: none; background: #fafafa; display: flex; align-items: flex-start; padding: 5px 7px 0 28px; font-size: 16.700px; gap: 39.500px; }
.tabs > span { height: 33px; line-height: 30px; white-space: nowrap; }
.tabs > .on { border-bottom: 3px solid #117865; font-weight: 600; margin-left: 7px; }
.share { margin-left: auto; width: 105px; height: 30px; border-radius: 4px; background: #117865; color: #fff; display: flex; align-items: center; padding: 0 11px 0 9px; justify-content: space-between; font-size: 14.500px; }

.ribbon { height: 117px; flex: none; background: #fafafa; display: flex; padding-top: 5px; position: relative; z-index: 2; box-shadow: 0 1px 4px rgba(0,0,0,.25); }
.group { height: 110px; border-right: 1px solid #d2d0ce; display: flex; flex-direction: column; }
.items { display: flex; height: 95px; flex: none; }
.label { font-size: 12.200px; line-height: 19px; text-align: center; letter-spacing: -.2px; }
.clip { width: 201px; } .data { width: 459px; } .queries { width: 145px; } .insert { width: 184px; } .calc { width: 143px; } .sens { width: 91px; } .pub { width: 74px; }
.data .items { padding-left: 9px; } .queries .items { padding-left: 10px; } .insert .items { padding-left: 7px; } .calc .items { padding-left: 11px; }
.cmd { display: flex; flex-direction: column; align-items: center; padding-top: 7px; flex: none; white-space: nowrap; text-align: center; font-size: 14.200px; line-height: 20px; letter-spacing: -.1px; }
.cmd > span { margin: 3px -10px 0; }
.nudge { margin-left: 4px; }
.back2 { margin-left: -3px; }
.off { color: #bdbbb9; }
.mini { display: inline-block; width: 8px; height: 6px; margin-left: 2px; vertical-align: 1px; }
.w-paste { width: 69px; } .w44 { width: 44px; } .w50 { width: 50px; } .w52 { width: 52px; } .w54 { width: 54px; } .w56 { width: 56px; } .w60 { width: 60px; } .w68 { width: 68px; } .w70 { width: 70px; } .w73 { width: 73px; } .w80 { width: 80px; } .w90 { width: 90px; }
.stack { display: flex; flex-direction: column; margin-left: -4px; margin-top: -1px; font-size: 14px; }
.stack div { display: flex; height: 30px; align-items: center; gap: 5px; white-space: nowrap; }
.collapse { margin: 97px 0 0 605px; }

.work { display: flex; height: 790px; flex: none; }
.rail { width: 51px; border-right: 1px solid #d8d8d8; }
.rail div { height: 49.500px; display: flex; align-items: center; justify-content: center; }
.rail .on { border-left: 3px solid #117865; padding-right: 3px; }
.rail div:nth-child(3) { height: 50px; }
.center { width: 1333px; flex: none; }
.canvas { position: relative; height: 746px; background: #a28600; overflow: hidden; }
.page { position: absolute; left: 10px; top: -20px; width: 1313px; height: 758px; border: 2px dotted #625f66; }
.card { position: absolute; width: 287px; background: #efe199; padding: 0 6px 0 7px; overflow: hidden; box-shadow: inset 0 0 0 1px rgba(190,165,60,.35); }
.card h2 { font: 600 16.500px/20px Roboto, sans-serif; color: #12239e; text-align: center; text-decoration: underline; text-underline-offset: 2px; text-decoration-thickness: 1.500px; letter-spacing: .1px; padding-right: 1px; }
.c1 { left: 12px; top: -1px; height: 287px; padding-top: 2px; } .c1 h2 { height: 63px; }
.c2 { left: 12px; top: 322px; height: 198px; } .c2 h2 { height: 45px; padding: 1px 21px 0 19px; line-height: 19.500px; }
.c3 { left: 12px; top: 565px; height: 154px; } .c3 h2 { height: 25px; padding-top: 1px; }
.c4 { left: 832px; top: -1px; height: 200px; padding-top: 2px; } .c4 h2 { height: 23px; }
.c5 { left: 832px; top: 236px; height: 197px; } .c5 h2 { height: 25px; padding-top: 2px; }
.body { display: flex; width: 274px; }
.grid { width: 265px; overflow: hidden; flex: none; font-size: 12.700px; letter-spacing: .17px; }
.g2 { width: 275px; }
.row { display: grid; height: 21.400px; line-height: 22.500px; background: #fff; border-bottom: 1px solid #eeeadb; }
.rows .row:nth-child(even) { background: #ececec; }
.row b { font-weight: 400; padding-left: 4.500px; white-space: nowrap; border-right: 1px solid #f6f2e2; }
.row b:last-child { border-right: 0; }
.head { height: 30px; border-bottom: 1px solid #2b88e0; line-height: 23px; }
.rows { overflow: hidden; border-bottom: 1px solid #2b88e0; }
.g1 .row { grid-template-columns: 104px 83px 100px; } .g2 .row { grid-template-columns: 197px 110px; } .g3 .row { grid-template-columns: 218px 80px; } .g4 .row { grid-template-columns: 123px 99px 80px; }
.g1 .rows .row b:first-child, .g2 .rows .row b:first-child, .g4 .rows .row b:first-child, .g1 .total b, .g2 .total b, .g4 .total b { text-align: right; padding-right: 5px; }
.g1 .rows .row b:first-child, .g2 .rows .row b:first-child, .g4 .rows .row b:first-child { letter-spacing: -.05px; }
.g4 .rows .row b:last-child { letter-spacing: .45px; }
.row.total { background: none; border: 0; } .row.total b { font-weight: 700; border: 0; font-size: 13.500px; letter-spacing: .1px; }
.g1 .rows { height: 157px; } .g1 .total { height: 21px; line-height: 24px; }
.g2 .rows { height: 86px; } .g2 .total { height: 23px; line-height: 21px; }
.g3 .rows { height: 85px; border: 0; }
.g4 .rows { height: 109px; } .g4 .total { height: 21px; line-height: 24px; }
.g5 .rows { height: 107px; } .g5 .total { height: 20px; line-height: 23px; }
.g5 .head b { position: relative; } .g5 .two { height: 38px; line-height: 18px; padding-top: 2px; } .g5 .rows .row:nth-child(2) { height: 22px; } .g5 .cut { height: 21px; line-height: 17px; }
.sort { position: absolute; left: 4px; top: 21px; border: 5px solid transparent; border-bottom: 4px solid #252423; border-top: 0; }
.hs { height: 9px; border-radius: 5px; background: #f7eecb; } .hs i { display: block; height: 9px; border-radius: 5px; background: #a99d76; }
.t117 { width: 117px; } .t253 { width: 253px; } .t188 { width: 188px; } .t136 { width: 136px; } .t104 { width: 104px; }
.vs { width: 9px; margin-bottom: 9px; border-radius: 5px; background: #f7eecb; flex: none; } .vs i { display: block; height: 9px; border-radius: 5px; background: #a99d76; } .vs .tall { height: 135px; }
.back { position: absolute; left: 529.500px; top: 302.500px; width: 88px; height: 92px; background: #f0e199; border: 1px solid #5e5000; border-radius: 5px; display: grid; place-items: center; }

.pages { height: 44px; display: flex; }
.view { width: 30px; margin-left: 13px; height: 39px; padding: 9px 0 0 2px; } .view.on { border-bottom: 4px solid #117865; }
.phone { margin-left: 29px; padding: 5px 0 0 2px; }
.nav { border: 6px solid transparent; margin-top: 15px; height: 12px; } .prev { border-right-color: #c8c6c4; border-left: 0; margin-left: 15px; } .next { border-left-color: #c8c6c4; border-right: 0; margin-left: 22px; }
.ptab { margin-left: 8px; width: 95px; background: #fff; border-left: 1px solid #999; display: grid; place-items: center; font-size: 14.200px; padding-bottom: 1px; }
.ptab.on { margin: 0; width: 98px; border-bottom: 5px solid #117865; padding: 4px 1px 0 0; font-weight: 600; border-left-color: #ccc; }
.plus { width: 49px; height: 40px; margin-top: 2px; background: #117865; display: grid; place-items: center; }

.filters { width: 41px; height: 746px; background: #fff; border-left: 1px solid #c8c6c4; }
.bookmarks { width: 44px; border-left: 1px solid #e1dfdd; border-right: 1px solid #e1dfdd; }
.filters, .bookmarks { flex: none; display: flex; flex-direction: column; padding: 15px 0 0 12px; font-size: 17.500px; font-weight: 600; }
.bookmarks { padding-top: 16px; padding-left: 13px; font-size: 18.400px; }
.flip { transform: scaleX(-1); }
.funnel { margin: 20px 0 0 2px; }
.filters span, .bookmarks span { writing-mode: vertical-rl; line-height: 24px; width: 24px; margin-top: 10px; margin-left: -4px; white-space: nowrap; }
.bookmarks span { margin-top: 19px; margin-left: -5px; }

.viz { width: 226px; flex: none; display: flex; flex-direction: column; border-right: 1px solid #e1dfdd; }
.phead { display: flex; height: 50px; align-items: center; justify-content: space-between; padding: 0 10px 0 10px; flex: none; }
h3 { font-size: 18.500px; font-weight: 600; margin-top: -1px; }
.sub { padding-left: 10px; line-height: 15px; height: 22px; font-size: 14.500px; font-weight: 500; white-space: nowrap; }
.modes { display: flex; height: 46px; gap: 42px; padding-left: 10px; } .modes div { width: 40px; height: 40px; display: grid; place-items: center; } .modes .on { background: #d0cecd; border-radius: 3px; }
.gallery { height: 258px; flex: none; padding: 13px 0 0 14px; display: grid; grid-template-columns: repeat(6, 35px); grid-auto-rows: 35px; border-bottom: 1px solid #d8d6d4; }
.gallery svg { width: 24px; height: 23px; }
.b { fill: #83beec; stroke: #1a6fb5; stroke-width: 1.400; } .g { fill: #c8c6c4; stroke: #888; stroke-width: 1.300; } .w { fill: #fafafa; stroke: #444; stroke-width: 1.500; }
.a { fill: none; stroke: #3b3a39; stroke-width: 1.500; } .bl { fill: none; stroke: #1a7fc8; stroke-width: 1.600; } .gl { fill: none; stroke: #888; stroke-width: 1.300; } .o { fill: #fdb64a; stroke: #e07b20; }
.t { font-size: 10.500px; fill: #2b8fd4; } .big { font-size: 21px; font-weight: 700; fill: #1d86c8; }
.wells { display: flex; height: 392px; overflow: hidden; } .inner { width: 218px; padding: 12px 0 0 5px; }
.lab { padding-left: 10px; line-height: 18px; height: 25px; }
.drop { height: 36px; border: 1px dashed #c0bebc; background: #fff; line-height: 34px; padding-left: 13px; font-size: 14.200px; } .drill { margin-top: 14px; height: 22px; font-weight: 600; color: #444; line-height: 18px; }
.opt { display: flex; height: 34px; align-items: center; justify-content: space-between; padding: 0 20px 0 10px; }
.tog { width: 40px; height: 20px; border: 1px solid #777; border-radius: 10px; background: #fff; font-size: 11px; display: flex; align-items: center; gap: 2px; padding-left: 5px; color: #555; } .tog i { width: 10px; height: 10px; border-radius: 5px; background: #605e5c; }
.dis { background: #c8c6c4; border-color: #c8c6c4; color: #999; gap: 4px; } .dis i { background: #fff; }
.fwell { margin-top: 7px; border: 1px dashed #c0bebc; border-bottom: 0; background: #fff; height: 208px; overflow: hidden; padding: 2px 3px; }
.f { height: 53px; border: 1px solid #c8c6c4; border-radius: 2px; margin-bottom: 3px; padding: 2px 8px 0 9px; } .f:nth-child(3) { margin-bottom: 2px; }
.f div { display: flex; height: 24px; align-items: center; gap: 13px; white-space: nowrap; } .f span { flex: 1; display: flex; align-items: center; padding-bottom: 1px; } .f svg { margin-top: 1px; } .f p { line-height: 22px; } .f em { font: 19px/14px "Liberation Serif", serif; color: #999; padding: 0 7px 0 4px; }
.sbar { width: 7px; height: 318px; margin-top: 2px; border-radius: 4px; background: #d2d0ce; }

.datap { width: 225px; }
.find { margin: 7px 0 0 5px; width: 215px; height: 33px; border: 1px solid #8a8886; border-radius: 3px; display: flex; align-items: center; padding: 1px 9px 0; font-size: 16px; color: #605e5c; } .find span { flex: 1; padding-left: 8px; }
.tree { padding: 11px 0 0 9px; color: #3b3a39; } .tree div { display: flex; align-items: center; height: 30px; white-space: nowrap; }
.t0 { gap: 5px; } .t0 span { padding-left: 2px; } .t1 { padding-left: 39px; } .t1 i { width: 15px; height: 15px; border: 1px solid #8a8886; border-radius: 2px; margin-right: 9px; } .t1 svg { width: 16px; } .t1 span { padding-left: 7px; }
mark { background: #117865; color: #fff; font-weight: 600; padding: 1px 0 2px; }

.status { height: 30px; flex: none; border-top: 1px solid #e1dfdd; border-bottom: 1px solid #000; display: flex; align-items: center; color: #555; font-size: 14.300px; padding-left: 5px; padding-top: 2px; white-space: nowrap; }
.pg { width: 1409px; } .zoom { display: flex; align-items: center; width: 171px; gap: 7px; } .zoom b { font-size: 17px; width: 6px; line-height: 20px; } .zoom b:last-child { width: 12px; }
.pct { width: 53px; font-size: 13.800px; } .upd { margin-left: 17px; }

.taskbar { height: 60px; flex: none; background: #14283c; color: #fff; display: flex; font-size: 14.300px; line-height: 20px; }
.weather { display: flex; width: 658px; padding: 11px 0 0 26px; gap: 8px; } .weather svg { margin-top: 4px; } .weather small { display: block; font-size: 14.400px; color: #c5cbd1; }
.apps { display: flex; } .apps > div { width: 55px; height: 60px; display: flex; flex-direction: column; align-items: center; padding-top: 16px; }
.run::after { content: ""; width: 8px; height: 4px; border-radius: 2px; background: #9099a3; margin-top: 5px; } .op::after { width: 30px; background: #ff9aa4; } .act::after { width: 20px; background: #5ccbff; }
.apps .act { background: #22374b; border-radius: 5px; height: 50px; width: 45px; margin: 6px 5px 0; padding-top: 10px; box-shadow: 4px 0 0 -1px #1c3145; }
.tray { margin-left: auto; display: flex; align-items: center; padding-right: 24px; } .tray > svg:nth-child(2) { margin-left: 12px; } .lang { margin-left: 18px; width: 30px; text-align: center; } .lang + svg { margin-left: 22px; } .tray svg + svg { margin-left: 10px; }
.clock { text-align: right; width: 95px; font-size: 14.800px; } .badge { margin-left: 10px; width: 20px; height: 20px; border-radius: 10px; background: #5ccbff; color: #14283c; text-align: center; font-weight: 400; }
```
